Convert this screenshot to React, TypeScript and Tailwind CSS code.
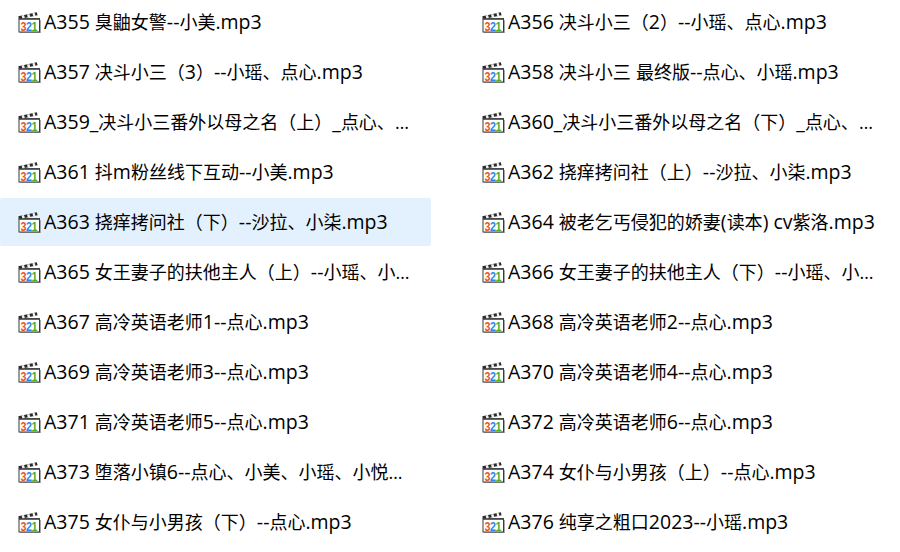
import React from 'react';

const files = [
  'A355 臭鼬女警--小美.mp3',
  'A356 决斗小三（2）--小瑶、点心.mp3',
  'A357 决斗小三（3）--小瑶、点心.mp3',
  'A358 决斗小三 最终版--点心、小瑶.mp3',
  'A359_决斗小三番外以母之名（上）_点心、小瑶、小美.mp3',
  'A360_决斗小三番外以母之名（下）_点心、小瑶、小美.mp3',
  'A361 抖m粉丝线下互动--小美.mp3',
  'A362 挠痒拷问社（上）--沙拉、小柒.mp3',
  'A363 挠痒拷问社（下）--沙拉、小柒.mp3',
  'A364 被老乞丐侵犯的娇妻(读本) cv紫洛.mp3',
  'A365 女王妻子的扶他主人（上）--小瑶、小美、点心.mp3',
  'A366 女王妻子的扶他主人（下）--小瑶、小美、点心.mp3',
  'A367 高冷英语老师1--点心.mp3',
  'A368 高冷英语老师2--点心.mp3',
  'A369 高冷英语老师3--点心.mp3',
  'A370 高冷英语老师4--点心.mp3',
  'A371 高冷英语老师5--点心.mp3',
  'A372 高冷英语老师6--点心.mp3',
  'A373 堕落小镇6--点心、小美、小瑶、小悦、沙拉.mp3',
  'A374 女仆与小男孩（上）--点心.mp3',
  'A375 女仆与小男孩（下）--点心.mp3',
  'A376 纯享之粗口2023--小瑶.mp3',
];

const FileIcon = () => (
  <svg width="23" height="23" viewBox="0 1 23 23" className="shrink-0">
    <rect x="2" y="10" width="21" height="13" fill="#a8a8a8" />
    <rect x="1" y="8.5" width="20.5" height="13.5" fill="#ffffff" stroke="#3a3a3a" strokeWidth="1" />
    <path d="M0.3 6.2 L18.8 2.2 L19.6 5.2 L1 9.2 Z" fill="#2b2b2b" />
    <path d="M3.6 5.6 L6 5 L6.9 8 L4.4 8.5 Z M9 4.4 L11.4 3.9 L12.3 6.8 L9.8 7.4 Z M14.4 3.2 L16.6 2.7 L17.5 5.7 L15.2 6.2 Z" fill="#f0f0f0" />
    <rect x="1" y="8.5" width="20.5" height="1.4" fill="#555555" />
    <g transform="translate(2.6 20.6) scale(0.86 1)">
      <text fontSize="12.5" fontWeight="700" fontFamily="'Liberation Sans', sans-serif">
        <tspan fill="#e0591c">3</tspan>
        <tspan fill="#2f86ea" dx="-0.6">2</tspan>
        <tspan fill="#46b032" dx="-0.6">1</tspan>
      </text>
    </g>
  </svg>
);

// latin runs are a bit larger than the cjk ones in the reference
const FileName = ({ name }: { name: string }) => (
  <>
    {name.split(/([\x00-\x7f]+)/).map((part, i) =>
      i % 2 === 1 ? (
        <span key={i} className="text-[19.5px]">{part}</span>
      ) : (
        part
      )
    )}
  </>
);

export default function App() {
  return (
    <div className="w-[900px] h-[552px] bg-white overflow-hidden font-['Open_Sans','Noto_Sans_CJK_SC',sans-serif] text-[18px] text-black">
      <div className="grid grid-cols-[431px_431px] gap-x-[33px] gap-y-[2px] -mt-[2px]">
        {files.map((name, i) => (
          <div
            key={name}
            className={`h-[48px] flex items-center pl-[18px] pr-[18px] gap-[3px] rounded-[2px] ${i === 8 ? 'bg-[#e2f1fd]' : ''}`}
          >
            <FileIcon />
            <span className="truncate leading-[26px]">
              <FileName name={name} />
            </span>
          </div>
        ))}
      </div>
    </div>
  );
}
